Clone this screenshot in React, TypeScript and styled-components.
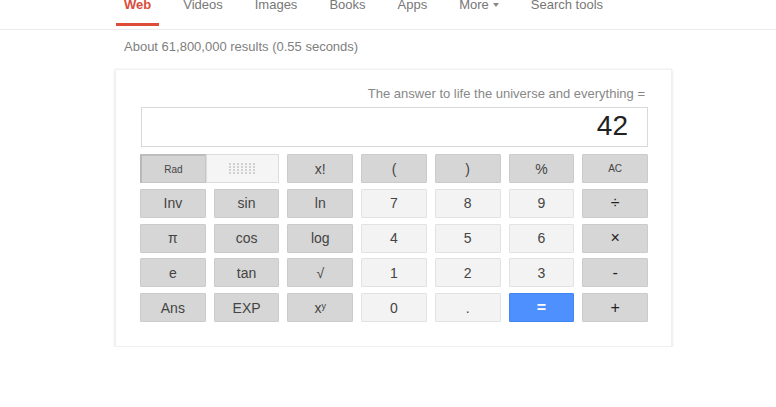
import * as React from 'react';
import styled, { createGlobalStyle } from 'styled-components';

const GlobalStyle = createGlobalStyle`
    html, body {
        margin: 0;
        padding: 0;
        background: #fff;
        font-family: "Liberation Sans", Arial, sans-serif;
    }
`;

type Tone = 'op' | 'num' | 'eq';

interface IKey {
    label: React.ReactNode;
    tone: Tone;
    small?: boolean;
    strong?: boolean;
}

const tabs = ['Web', 'Videos', 'Images', 'Books', 'Apps', 'More', 'Search tools'];

const keys: IKey[] = [
    { label: 'x!', tone: 'op' },
    { label: '(', tone: 'op' },
    { label: ')', tone: 'op' },
    { label: '%', tone: 'op' },
    { label: 'AC', tone: 'op', small: true },
    { label: 'Inv', tone: 'op' },
    { label: 'sin', tone: 'op' },
    { label: 'ln', tone: 'op' },
    { label: '7', tone: 'num' },
    { label: '8', tone: 'num' },
    { label: '9', tone: 'num' },
    { label: '÷', tone: 'op', strong: true },
    { label: 'π', tone: 'op' },
    { label: 'cos', tone: 'op' },
    { label: 'log', tone: 'op' },
    { label: '4', tone: 'num' },
    { label: '5', tone: 'num' },
    { label: '6', tone: 'num' },
    { label: '×', tone: 'op', strong: true },
    { label: 'e', tone: 'op' },
    { label: 'tan', tone: 'op' },
    { label: '√', tone: 'op' },
    { label: '1', tone: 'num' },
    { label: '2', tone: 'num' },
    { label: '3', tone: 'num' },
    { label: '-', tone: 'op', strong: true },
    { label: 'Ans', tone: 'op' },
    { label: 'EXP', tone: 'op' },
    { label: <>x<sup>y</sup></>, tone: 'op' },
    { label: '0', tone: 'num' },
    { label: '.', tone: 'num' },
    { label: '=', tone: 'eq', strong: true },
    { label: '+', tone: 'op', strong: true }
];

const DotGrid = () => (
    <svg width="27" height="12" viewBox="0 0 27 12">
        {[0, 1, 2, 3].map(r =>
            [0, 1, 2, 3, 4, 5, 6].map(c => (
                <rect key={`${r}-${c}`} x={c * 4} y={r * 3} width="2" height="2" fill="#d0d0d0" />
            ))
        )}
    </svg>
);

const App = () => (
    <>
        <GlobalStyle />
        <Header>
            <Tabs>
                {tabs.map((t, i) => (
                    <Tab key={t} $active={i === 0}>
                        {t}
                        {t === 'More' && <Caret />}
                    </Tab>
                ))}
            </Tabs>
        </Header>
        <Results>About 61,800,000 results (0.55 seconds)</Results>
        <Card>
            <Caption>The answer to life the universe and everything =</Caption>
            <Display>42</Display>
            <Pad>
                <Toggle>
                    <RadPart>Rad</RadPart>
                    <DegPart><DotGrid /></DegPart>
                </Toggle>
                {keys.map((k, i) => (
                    <Key key={i} $tone={k.tone} $small={k.small} $strong={k.strong}>
                        {k.label}
                    </Key>
                ))}
            </Pad>
        </Card>
    </>
);

const Header = styled.div`
    height: 29px;
    border-bottom: 1px solid #ebebeb;
    overflow: hidden;
`;

const Tabs = styled.div`
    display: flex;
    gap: 16px;
    padding-left: 116px;
    height: 29px;
`;

const Tab = styled.div<{ $active?: boolean }>`
    display: flex;
    align-items: flex-start;
    padding: 0 8px;
    height: 26px;
    margin-top: -3px;
    font-size: 13px;
    line-height: 15px;
    color: ${p => p.$active ? '#dd4b39' : '#777'};
    font-weight: ${p => p.$active ? 'bold' : 'normal'};
    border-bottom: 3px solid ${p => p.$active ? '#dd4b39' : 'transparent'};
    box-sizing: content-box;
`;

const Caret = styled.span`
    display: inline-block;
    margin: 6px 0 0 4px;
    border-left: 3.5px solid transparent;
    border-right: 3.5px solid transparent;
    border-top: 4px solid #888;
`;

const Results = styled.div`
    padding: 9px 0 0 124px;
    height: 30px;
    font-size: 13px;
    line-height: 16px;
    color: #808080;
`;

const Card = styled.div`
    margin-left: 115px;
    width: 557px;
    height: 278px;
    box-sizing: border-box;
    padding: 17px 23px 0 24px;
    background: #fff;
    border: 1px solid #f0f0f0;
    box-shadow: 0 1px 3px rgba(0, 0, 0, 0.14);
`;

const Caption = styled.div`
    text-align: right;
    padding-right: 3px;
    font-size: 13px;
    line-height: 14px;
    color: #878787;
    margin-bottom: 6px;
`;

const Display = styled.div`
    height: 38px;
    border: 1px solid #d9d9d9;
    margin-left: 1px;
    padding-right: 19px;
    text-align: right;
    font-size: 28px;
    line-height: 36px;
    color: #222;
    margin-bottom: 7px;
`;

const Pad = styled.div`
    display: grid;
    grid-template-columns: repeat(7, 1fr);
    grid-auto-rows: 29px;
    column-gap: 8px;
    row-gap: 5.75px;
`;

const Toggle = styled.div`
    grid-column: span 2;
    display: flex;
`;

const RadPart = styled.div`
    width: 66px;
    box-sizing: border-box;
    display: flex;
    align-items: center;
    justify-content: center;
    background: #d4d4d4;
    border: 1px solid #c6c6c6;
    border-left: 2px solid #b8b8b8;
    border-top: 2px solid #bdbdbd;
    font-size: 10px;
    color: #444;
`;

const DegPart = styled.div`
    flex: 1;
    display: flex;
    align-items: center;
    justify-content: center;
    background: #f5f5f5;
    border: 1px solid #dcdcdc;
`;

const toneBg: Record<Tone, string> = { op: '#d6d6d6', num: '#f3f3f3', eq: '#4d90fe' };
const toneBorder: Record<Tone, string> = { op: '#cbcbcb', num: '#e2e2e2', eq: '#3f85f4' };

const Key = styled.div<{ $tone: Tone; $small?: boolean; $strong?: boolean }>`
    display: flex;
    align-items: center;
    justify-content: center;
    box-sizing: border-box;
    background: ${p => toneBg[p.$tone]};
    border: 1px solid ${p => toneBorder[p.$tone]};
    border-radius: 1px;
    font-size: ${p => p.$small ? '10px' : p.$strong ? '16px' : '14px'};
    font-weight: ${p => p.$tone === 'eq' ? 'bold' : 'normal'};
    color: ${p => p.$tone === 'eq' ? '#fff' : p.$strong ? '#222' : '#444'};
    sup {
        font-size: 9px;
        vertical-align: top;
        margin-top: -3px;
    }
`;

export default App;
